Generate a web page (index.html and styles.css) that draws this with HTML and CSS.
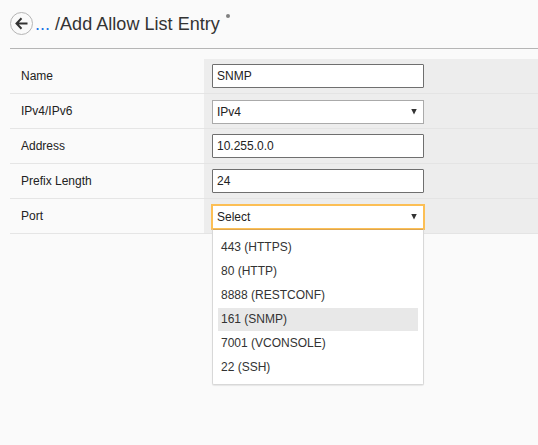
FILE: index.html
```html
<!DOCTYPE html>
<html lang="en">
<head>
<meta charset="utf-8">
<title>Add Allow List Entry</title>
<link rel="stylesheet" href="styles.css">
</head>
<body>
<header class="header">
  <a class="back" href="#" aria-label="Back">
    <svg width="24" height="24" viewBox="0 0 24 24" fill="none">
      <circle cx="11.5" cy="11.5" r="11" stroke="#b5b5b5"/>
      <path d="M17.5 11.5H7M11.5 6.2L6.5 11.5L11.5 16.8" stroke="#333" stroke-width="2"/>
    </svg>
  </a>
  <a class="crumb" href="#">...</a>
  <h1 class="title">/Add Allow List Entry</h1>
  <span class="dirty"></span>
</header>
<main class="form">
  <div class="row"><label class="label">Name</label><div class="field"><input class="input" type="text" value="SNMP"></div></div>
  <div class="row"><label class="label">IPv4/IPv6</label><div class="field"><div class="select"><span>IPv4</span><i class="arrow"></i></div></div></div>
  <div class="row"><label class="label">Address</label><div class="field"><input class="input" type="text" value="10.255.0.0"></div></div>
  <div class="row"><label class="label">Prefix Length</label><div class="field"><input class="input" type="text" value="24"></div></div>
  <div class="row"><label class="label">Port</label><div class="field">
    <div class="select open"><span>Select</span><i class="arrow"></i>
      <ul class="menu">
        <li>443 (HTTPS)</li>
        <li>80 (HTTP)</li>
        <li>8888 (RESTCONF)</li>
        <li class="active">161 (SNMP)</li>
        <li>7001 (VCONSOLE)</li>
        <li>22 (SSH)</li>
      </ul>
    </div>
  </div></div>
</main>
</body>
</html>
```

FILE: styles.css
```css
* { box-sizing: border-box; }
body {
  margin: 0;
  height: 445px;
  overflow: hidden;
  background: #fafafa;
  color: #222;
  font: 12px/16px "Liberation Sans", Arial, sans-serif;
}
.header {
  display: flex;
  align-items: flex-start;
  height: 49px;
  margin-left: 10px;
  padding-top: 12px;
  border-bottom: 1px solid #b5b5b5;
}
.back { width: 24px; height: 24px; }
.back svg { display: block; }
.crumb {
  width: 21px;
  padding-left: 1px;
  color: #1673e6;
  font-size: 18px;
  line-height: 24px;
  text-decoration: none;
}
.title {
  margin: 0;
  color: #333;
  font-size: 18px;
  font-weight: 400;
  letter-spacing: .04px;
  line-height: 24px;
  white-space: nowrap;
}
.dirty {
  width: 4px;
  height: 4px;
  margin: 2px 0 0 6px;
  border-radius: 50%;
  background: #808080;
}
.form { margin: 10px 0 0 10px; }
.row {
  display: flex;
  height: 35px;
}
.label {
  width: 194px;
  padding: 9px 0 0 11px;
  border-bottom: 1px solid #e5e5e5;
}
.field {
  flex: 1;
  padding: 5px 0 0 8px;
  border-bottom: 1px solid #e4e4e4;
  background: #ededed;
}
.input {
  display: block;
  width: 212px;
  height: 24px;
  padding: 0 4px;
  border: 1px solid #6f6f6f;
  border-radius: 1px;
  background: #fff;
  color: #222;
  font: inherit;
}
.select {
  position: relative;
  display: flex;
  align-items: center;
  justify-content: space-between;
  width: 212px;
  height: 24px;
  margin-top: 1px;
  padding: 0 6px 0 4px;
  border: 1px solid #aaa;
  background: #fff;
}
.arrow {
  width: 6px;
  height: 6px;
  margin-top: -1px;
  background: #333;
  clip-path: polygon(0 0, 100% 0, 50% 100%);
}
.open {
  border-color: #fcbf55;
  box-shadow: 0 0 0 1px #fcbf55;
}
.menu {
  position: absolute;
  top: 23px;
  left: -1px;
  width: 212px;
  height: 156px;
  margin: 0;
  padding: 6px 5px;
  border: 1px solid #d8d8d8;
  border-top: 1px solid #dda650;
  border-radius: 0 0 2px 2px;
  background: #fff;
  box-shadow: 0 1px 1px rgba(0, 0, 0, .08);
  color: #333;
  list-style: none;
}
.menu li {
  height: 23px;
  margin-bottom: 1px;
  padding-left: 3px;
  line-height: 22px;
}
.menu .active { background: #e8e8e8; }
```
